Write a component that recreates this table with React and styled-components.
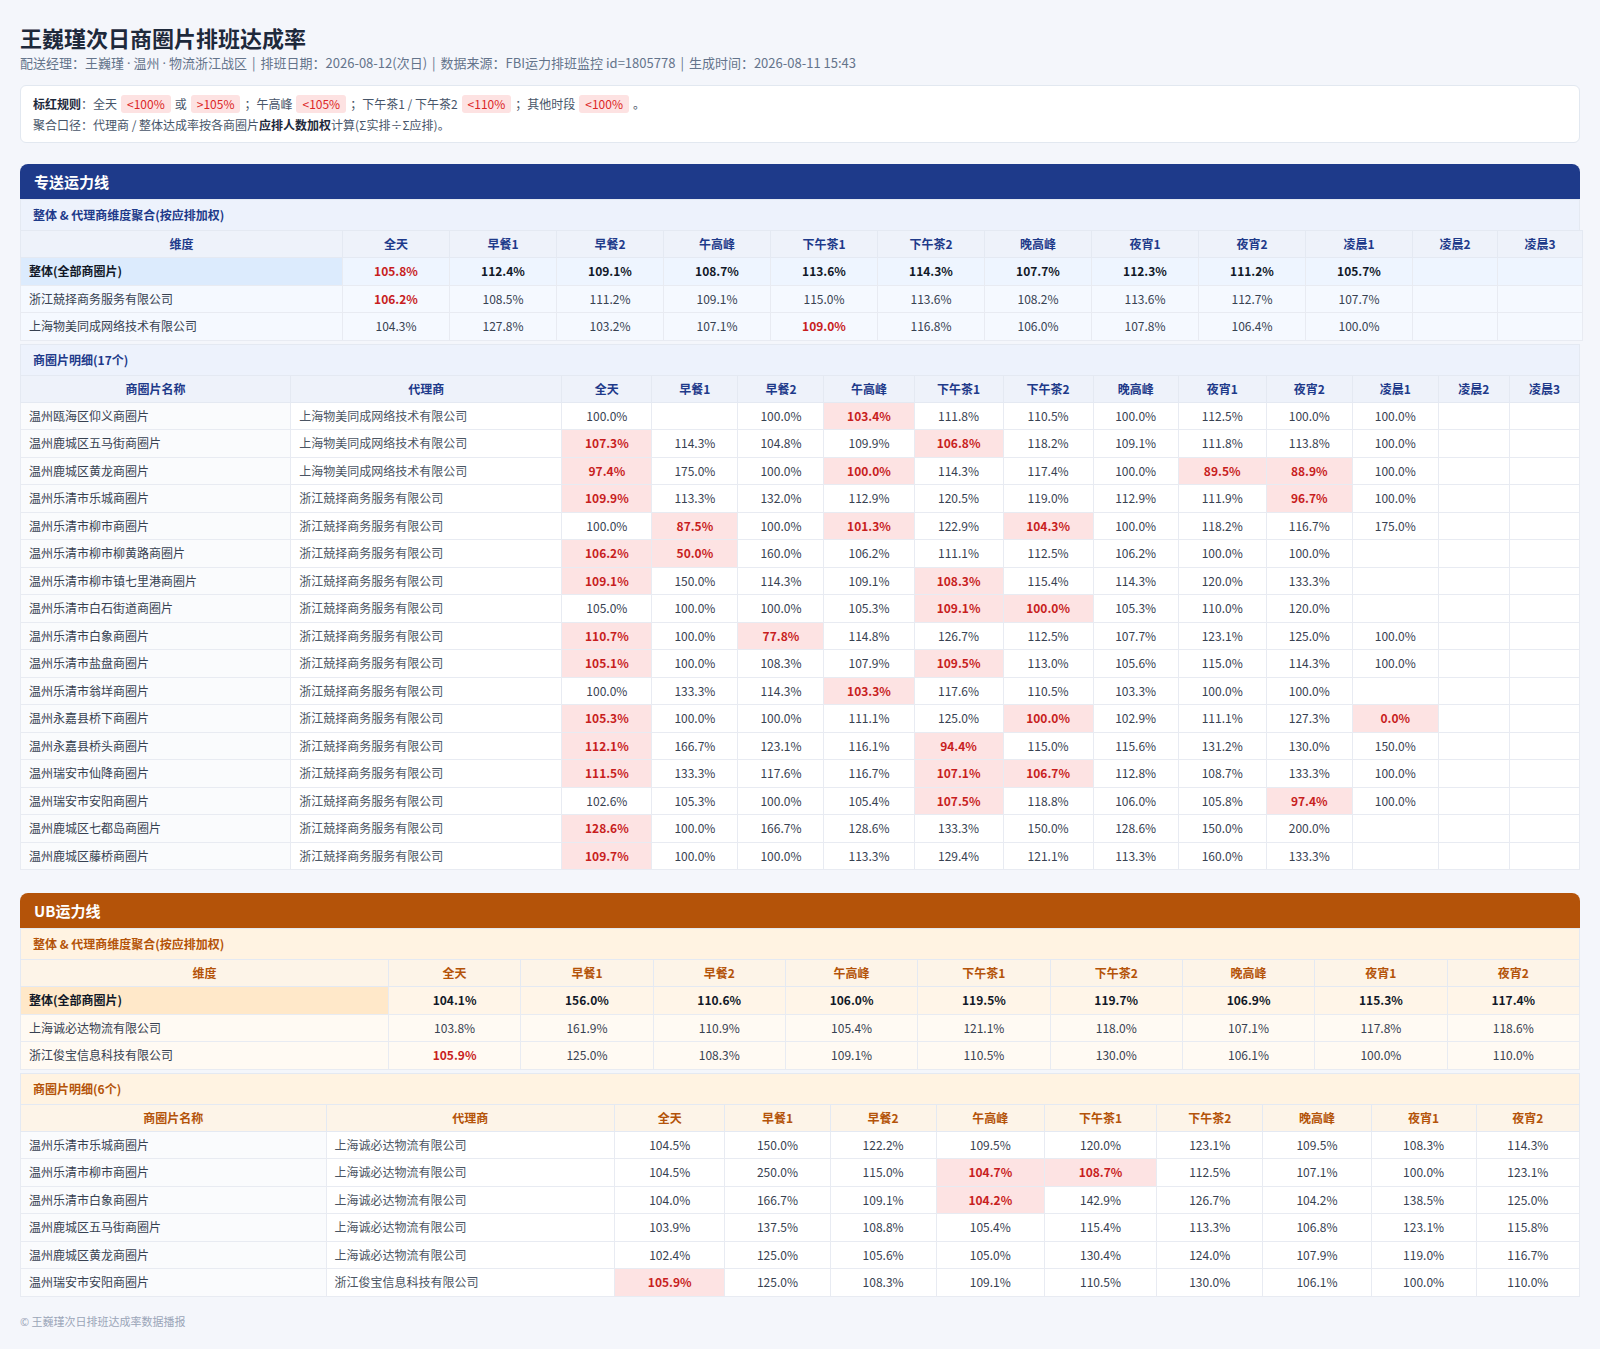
import React from 'react';
import styled, { createGlobalStyle, ThemeProvider } from 'styled-components';

const GlobalStyle = createGlobalStyle`
  html, body {
    margin: 0;
    padding: 0;
    background: #f4f6fb;
  }
  body {
    font-family: "Noto Sans CJK SC", "Noto Sans", "Liberation Sans", sans-serif;
    color: #374151;
  }
`;

const blueTheme = {
  head: '#1e3a8a',
  sub: '#edf2fc',
  accent: '#1e3a8a',
  th: '#eef2fa',
  totalKey: '#dcebfd',
  total: '#eef5ff',
  row: '#f5f9ff',
};

const orangeTheme = {
  head: '#b45309',
  sub: '#fff3e2',
  accent: '#b45309',
  th: '#fdf4e8',
  totalKey: '#ffe8c9',
  total: '#fff5e8',
  row: '#fffaf3',
};

const Page = styled.div`
  padding: 20px 20px 20px;
`;

const Title = styled.h1`
  margin: 0;
  font-size: 22px;
  line-height: 34px;
  font-weight: 700;
  color: #1e293b;
`;

const Meta = styled.p`
  margin: 0;
  font-size: 13px;
  line-height: 18px;
  color: #64748b;
`;

const Sep = styled.span`
  margin: 0 5px;
`;

const Dot = styled.span`
  font-family: "Noto Sans", sans-serif;
  margin: 0 3px;
`;

const RuleBox = styled.div`
  margin-top: 13px;
  background: #fff;
  border: 1px solid #e2e8f0;
  border-radius: 6px;
  padding: 8px 12px 8px;
  font-size: 12px;
  color: #475569;
`;

const RuleLine = styled.div`
  line-height: 20px;
  & + & {
    margin-top: 2px;
    line-height: 18px;
  }
  b {
    color: #1e293b;
    font-weight: 700;
  }
`;

const Badge = styled.span`
  display: inline-block;
  margin: 0 4px;
  padding: 0 6px;
  line-height: 18px;
  border-radius: 3px;
  background: #fde2e2;
  color: #dc2626;
`;

const Card = styled.section`
  margin-top: 21px;
  display: flex;
  flex-direction: column;
  gap: 3px;
  & + & {
    margin-top: 23px;
  }
`;

const CardHead = styled.h2`
  margin: 0 0 -3px;
  padding: 7px 14px;
  font-size: 15px;
  line-height: 21px;
  font-weight: 700;
  color: #fff;
  background: ${({ theme }) => theme.head};
  border-radius: 8px 8px 0 0;
`;

const Block = styled.div`
  background: #fff;
`;

const BlockTitle = styled.div`
  padding: 7px 12px;
  font-size: 12px;
  line-height: 16px;
  font-weight: 700;
  color: ${({ theme }) => theme.accent};
  background: ${({ theme }) => theme.sub};
  border: 1px solid #e4e9f2;
  border-bottom: none;
`;

const Table = styled.table`
  width: 100%;
  border-collapse: collapse;
  table-layout: fixed;
  font-size: 12px;
`;

const Th = styled.th`
  padding: 5px 8px;
  line-height: 16px;
  font-weight: 700;
  text-align: center;
  color: ${({ theme }) => theme.accent};
  background: ${({ theme }) => theme.th};
  border: 1px solid #e4e9f2;
  white-space: nowrap;
`;

const Td = styled.td`
  padding: 5px 8px;
  line-height: 16.5px;
  border: 1px solid #e8ebf2;
  white-space: nowrap;
  overflow: hidden;
  text-align: ${({ $left }) => ($left ? 'left' : 'center')};
  font-weight: ${({ $bold, $red }) => ($bold || $red ? 700 : 400)};
  color: ${({ $bold, $red, $muted }) =>
    $red ? '#c81e1e' : $bold ? '#111827' : $muted ? '#4b5563' : '#374151'};
  background: ${({ $bg }) => $bg || '#fff'};
`;

const Footer = styled.div`
  margin-top: 16px;
  font-size: 11px;
  line-height: 16px;
  color: #9aa5b8;
`;

const isRed = (col, v) => {
  if (v === '' || v == null) return false;
  if (col === '全天') return v < 100 || v > 105;
  if (col === '午高峰') return v < 105;
  if (col === '下午茶1' || col === '下午茶2') return v < 110;
  return v < 100;
};

const fmt = (v) => (v === '' || v == null ? '' : `${v.toFixed(1)}%`);

const PERIODS_FULL = ['全天', '早餐1', '早餐2', '午高峰', '下午茶1', '下午茶2', '晚高峰', '夜宵1', '夜宵2', '凌晨1', '凌晨2', '凌晨3'];
const PERIODS_UB = PERIODS_FULL.slice(0, 9);

const _ = '';

const zsAgg = [
  ['整体(全部商圈片)', [105.8, 112.4, 109.1, 108.7, 113.6, 114.3, 107.7, 112.3, 111.2, 105.7, _, _]],
  ['浙江兢择商务服务有限公司', [106.2, 108.5, 111.2, 109.1, 115.0, 113.6, 108.2, 113.6, 112.7, 107.7, _, _]],
  ['上海物美同成网络技术有限公司', [104.3, 127.8, 103.2, 107.1, 109.0, 116.8, 106.0, 107.8, 106.4, 100.0, _, _]],
];

const WM = '上海物美同成网络技术有限公司';
const JZ = '浙江兢择商务服务有限公司';

const zsDetail = [
  ['温州瓯海区仰义商圈片', WM, [100.0, _, 100.0, 103.4, 111.8, 110.5, 100.0, 112.5, 100.0, 100.0, _, _]],
  ['温州鹿城区五马街商圈片', WM, [107.3, 114.3, 104.8, 109.9, 106.8, 118.2, 109.1, 111.8, 113.8, 100.0, _, _]],
  ['温州鹿城区黄龙商圈片', WM, [97.4, 175.0, 100.0, 100.0, 114.3, 117.4, 100.0, 89.5, 88.9, 100.0, _, _]],
  ['温州乐清市乐城商圈片', JZ, [109.9, 113.3, 132.0, 112.9, 120.5, 119.0, 112.9, 111.9, 96.7, 100.0, _, _]],
  ['温州乐清市柳市商圈片', JZ, [100.0, 87.5, 100.0, 101.3, 122.9, 104.3, 100.0, 118.2, 116.7, 175.0, _, _]],
  ['温州乐清市柳市柳黄路商圈片', JZ, [106.2, 50.0, 160.0, 106.2, 111.1, 112.5, 106.2, 100.0, 100.0, _, _, _]],
  ['温州乐清市柳市镇七里港商圈片', JZ, [109.1, 150.0, 114.3, 109.1, 108.3, 115.4, 114.3, 120.0, 133.3, _, _, _]],
  ['温州乐清市白石街道商圈片', JZ, [105.0, 100.0, 100.0, 105.3, 109.1, 100.0, 105.3, 110.0, 120.0, _, _, _]],
  ['温州乐清市白象商圈片', JZ, [110.7, 100.0, 77.8, 114.8, 126.7, 112.5, 107.7, 123.1, 125.0, 100.0, _, _]],
  ['温州乐清市盐盘商圈片', JZ, [105.1, 100.0, 108.3, 107.9, 109.5, 113.0, 105.6, 115.0, 114.3, 100.0, _, _]],
  ['温州乐清市翁垟商圈片', JZ, [100.0, 133.3, 114.3, 103.3, 117.6, 110.5, 103.3, 100.0, 100.0, _, _, _]],
  ['温州永嘉县桥下商圈片', JZ, [105.3, 100.0, 100.0, 111.1, 125.0, 100.0, 102.9, 111.1, 127.3, 0.0, _, _]],
  ['温州永嘉县桥头商圈片', JZ, [112.1, 166.7, 123.1, 116.1, 94.4, 115.0, 115.6, 131.2, 130.0, 150.0, _, _]],
  ['温州瑞安市仙降商圈片', JZ, [111.5, 133.3, 117.6, 116.7, 107.1, 106.7, 112.8, 108.7, 133.3, 100.0, _, _]],
  ['温州瑞安市安阳商圈片', JZ, [102.6, 105.3, 100.0, 105.4, 107.5, 118.8, 106.0, 105.8, 97.4, 100.0, _, _]],
  ['温州鹿城区七都岛商圈片', JZ, [128.6, 100.0, 166.7, 128.6, 133.3, 150.0, 128.6, 150.0, 200.0, _, _, _]],
  ['温州鹿城区藤桥商圈片', JZ, [109.7, 100.0, 100.0, 113.3, 129.4, 121.1, 113.3, 160.0, 133.3, _, _, _]],
];

const ubAgg = [
  ['整体(全部商圈片)', [104.1, 156.0, 110.6, 106.0, 119.5, 119.7, 106.9, 115.3, 117.4]],
  ['上海诚必达物流有限公司', [103.8, 161.9, 110.9, 105.4, 121.1, 118.0, 107.1, 117.8, 118.6]],
  ['浙江俊宝信息科技有限公司', [105.9, 125.0, 108.3, 109.1, 110.5, 130.0, 106.1, 100.0, 110.0]],
];

const CBD = '上海诚必达物流有限公司';

const ubDetail = [
  ['温州乐清市乐城商圈片', CBD, [104.5, 150.0, 122.2, 109.5, 120.0, 123.1, 109.5, 108.3, 114.3]],
  ['温州乐清市柳市商圈片', CBD, [104.5, 250.0, 115.0, 104.7, 108.7, 112.5, 107.1, 100.0, 123.1]],
  ['温州乐清市白象商圈片', CBD, [104.0, 166.7, 109.1, 104.2, 142.9, 126.7, 104.2, 138.5, 125.0]],
  ['温州鹿城区五马街商圈片', CBD, [103.9, 137.5, 108.8, 105.4, 115.4, 113.3, 106.8, 123.1, 115.8]],
  ['温州鹿城区黄龙商圈片', CBD, [102.4, 125.0, 105.6, 105.0, 130.4, 124.0, 107.9, 119.0, 116.7]],
  ['温州瑞安市安阳商圈片', '浙江俊宝信息科技有限公司', [105.9, 125.0, 108.3, 109.1, 110.5, 130.0, 106.1, 100.0, 110.0]],
];

const Cols = ({ widths }) => (
  <colgroup>
    {widths.map((w, i) => (
      <col key={i} style={{ width: w }} />
    ))}
  </colgroup>
);

const AggTable = ({ periods, rows, widths, theme }) => (
  <Block>
    <BlockTitle>整体 &amp; 代理商维度聚合(按应排加权)</BlockTitle>
    <Table>
      <Cols widths={widths} />
      <thead>
        <tr>
          <Th>维度</Th>
          {periods.map((p) => (
            <Th key={p}>{p}</Th>
          ))}
        </tr>
      </thead>
      <tbody>
        {rows.map(([name, vals], ri) => {
          const total = ri === 0;
          return (
            <tr key={name}>
              <Td $left $bold={total} $bg={total ? theme.totalKey : theme.row}>
                {name}
              </Td>
              {vals.map((v, i) => (
                <Td key={i} $bold={total} $red={isRed(periods[i], v)} $bg={total ? theme.total : theme.row}>
                  {fmt(v)}
                </Td>
              ))}
            </tr>
          );
        })}
      </tbody>
    </Table>
  </Block>
);

const DetailTable = ({ periods, rows, widths }) => (
  <Block>
    <BlockTitle>商圈片明细({rows.length}个)</BlockTitle>
    <Table>
      <Cols widths={widths} />
      <thead>
        <tr>
          <Th>商圈片名称</Th>
          <Th>代理商</Th>
          {periods.map((p) => (
            <Th key={p}>{p}</Th>
          ))}
        </tr>
      </thead>
      <tbody>
        {rows.map(([name, agent, vals]) => (
          <tr key={name}>
            <Td $left $bg="#fafbfd">{name}</Td>
            <Td $left $muted>{agent}</Td>
            {vals.map((v, i) => {
              const red = isRed(periods[i], v);
              return (
                <Td key={i} $red={red} $bg={red ? '#fde3e3' : '#fff'}>
                  {fmt(v)}
                </Td>
              );
            })}
          </tr>
        ))}
      </tbody>
    </Table>
  </Block>
);

const LineSection = ({ title, theme, periods, agg, detail, aggWidths, detailWidths }) => (
  <ThemeProvider theme={theme}>
    <Card>
      <CardHead>{title}</CardHead>
      <AggTable periods={periods} rows={agg} widths={aggWidths} theme={theme} />
      <DetailTable periods={periods} rows={detail} widths={detailWidths} />
    </Card>
  </ThemeProvider>
);

export default function App() {
  return (
    <>
      <GlobalStyle />
      <Page>
        <Title>王巍瑾次日商圈片排班达成率</Title>
        <Meta>
          配送经理：王巍瑾<Dot>·</Dot>温州<Dot>·</Dot>物流浙江战区<Sep>|</Sep>排班日期：2026-08-12(次日)<Sep>|</Sep>数据来源：FBI运力排班监控 id=1805778<Sep>|</Sep>生成时间：2026-08-11 15:43
        </Meta>
        <RuleBox>
          <RuleLine>
            <b>标红规则</b>：全天<Badge>&lt;100%</Badge>或<Badge>&gt;105%</Badge>；午高峰<Badge>&lt;105%</Badge>；下午茶1 / 下午茶2<Badge>&lt;110%</Badge>；其他时段<Badge>&lt;100%</Badge>。
          </RuleLine>
          <RuleLine>
            聚合口径：代理商 / 整体达成率按各商圈片<b>应排人数加权</b>计算(Σ实排÷Σ应排)。
          </RuleLine>
        </RuleBox>

        <LineSection
          title="专送运力线"
          theme={blueTheme}
          periods={PERIODS_FULL}
          agg={zsAgg}
          detail={zsDetail}
          aggWidths={[322, 107, 107, 107, 107, 107, 107, 107, 107, 107, 107, 85, 85]}
          detailWidths={[270, 271, 90, 86, 86, 90, 89, 90, 85, 88, 86, 86, 71, 70]}
        />

        <LineSection
          title="UB运力线"
          theme={orangeTheme}
          periods={PERIODS_UB}
          agg={ubAgg}
          detail={ubDetail}
          aggWidths={[367, 132, 132, 132, 132, 132, 132, 132, 132, 132]}
          detailWidths={[305, 288, 110, 105, 106, 108, 112, 106, 108, 105, 103]}
        />

        <Footer>© 王巍瑾次日排班达成率数据播报</Footer>
      </Page>
    </>
  );
}
